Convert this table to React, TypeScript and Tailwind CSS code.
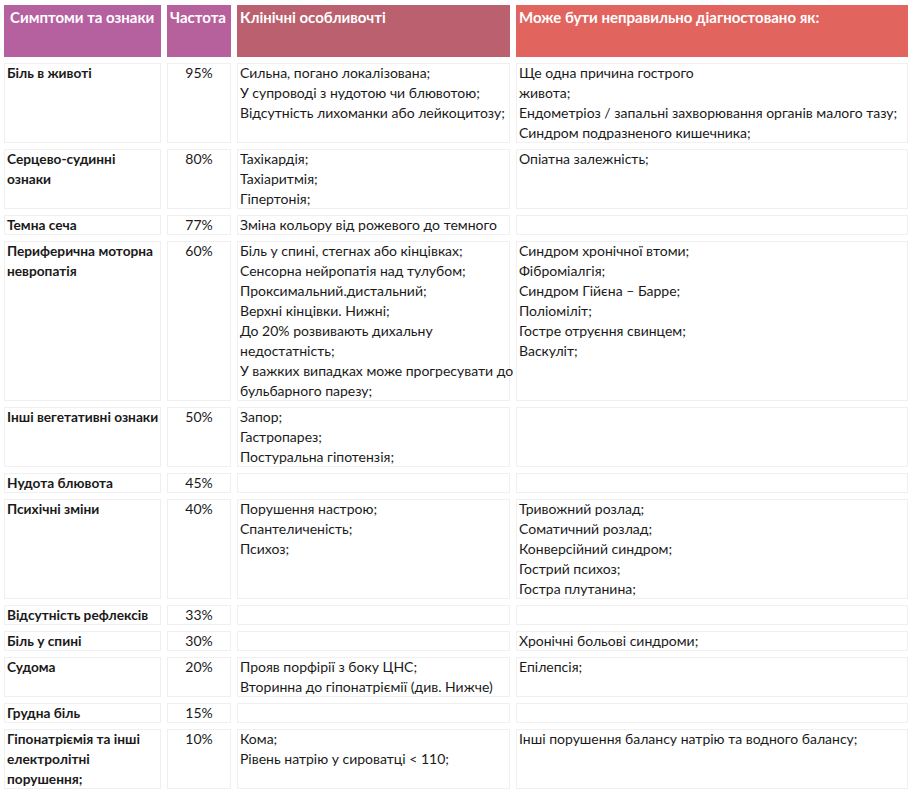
import React from "react";

type Row = {
  name: string[];
  freq: string;
  features: string[];
  misdx: string[];
};

const rows: Row[] = [
  {
    name: ["Біль в животі"],
    freq: "95%",
    features: [
      "Сильна, погано локалізована;",
      "У супроводі з нудотою чи блювотою;",
      "Відсутність лихоманки або лейкоцитозу;",
    ],
    misdx: [
      "Ще одна причина гострого",
      "живота;",
      "Ендометріоз / запальні захворювання органів малого тазу;",
      "Синдром подразненого кишечника;",
    ],
  },
  {
    name: ["Серцево-судинні", "ознаки"],
    freq: "80%",
    features: ["Тахікардія;", "Тахіаритмія;", "Гіпертонія;"],
    misdx: ["Опіатна залежність;"],
  },
  {
    name: ["Темна сеча"],
    freq: "77%",
    features: ["Зміна кольору від рожевого до темного"],
    misdx: [],
  },
  {
    name: ["Периферична моторна", "невропатія"],
    freq: "60%",
    features: [
      "Біль у спині, стегнах або кінцівках;",
      "Сенсорна нейропатія над тулубом;",
      "Проксимальний.дистальний;",
      "Верхні кінцівки. Нижні;",
      "До 20% розвивають дихальну",
      "недостатність;",
      "У важких випадках може прогресувати до",
      "бульбарного парезу;",
    ],
    misdx: [
      "Синдром хронічної втоми;",
      "Фіброміалгія;",
      "Синдром Гійєна – Барре;",
      "Поліоміліт;",
      "Гостре отруєння свинцем;",
      "Васкуліт;",
    ],
  },
  {
    name: ["Інші вегетативні ознаки"],
    freq: "50%",
    features: ["Запор;", "Гастропарез;", "Постуральна гіпотензія;"],
    misdx: [],
  },
  { name: ["Нудота блювота"], freq: "45%", features: [], misdx: [] },
  {
    name: ["Психічні зміни"],
    freq: "40%",
    features: ["Порушення настрою;", "Спантеличеність;", "Психоз;"],
    misdx: [
      "Тривожний розлад;",
      "Соматичний розлад;",
      "Конверсійний синдром;",
      "Гострий психоз;",
      "Гостра плутанина;",
    ],
  },
  { name: ["Відсутність рефлексів"], freq: "33%", features: [], misdx: [] },
  {
    name: ["Біль у спині"],
    freq: "30%",
    features: [],
    misdx: ["Хронічні больові синдроми;"],
  },
  {
    name: ["Судома"],
    freq: "20%",
    features: [
      "Прояв порфірії з боку ЦНС;",
      "Вторинна до гіпонатріємії (див. Нижче)",
    ],
    misdx: ["Епілепсія;"],
  },
  { name: ["Грудна біль"], freq: "15%", features: [], misdx: [] },
  {
    name: ["Гіпонатріємія та інші", "електролітні", "порушення;"],
    freq: "10%",
    features: ["Кома;", "Рівень натрію у сироватці < 110;"],
    misdx: ["Інші порушення балансу натрію та водного балансу;"],
  },
];

// one div per line, breaks are kept as in the source table
const Lines = ({ items }: { items: string[] }) => (
  <>
    {items.map((t, i) => (
      <div key={i} className="whitespace-nowrap">
        {t}
      </div>
    ))}
  </>
);

const cell = "min-h-[20px] ring-1 ring-inset ring-[#f0f0f0] bg-white";
const head = "h-[52px] pt-[2px] font-bold text-[15px] text-white whitespace-nowrap";

export default function App() {
  return (
    <div
      className="w-[912px] h-[796px] overflow-hidden bg-white pl-[4px] pt-[5px] text-[14px] leading-[20px] text-[#1a1a1a]"
      style={{ fontFamily: "Lato, 'Liberation Sans', sans-serif" }}
    >
      <div className="grid grid-cols-[157px_64px_273px_392px] gap-x-[6px] gap-y-[6px]">
        <div className={`${head} bg-[#b5619f] px-[6px]`}>Симптоми та ознаки</div>
        <div className={`${head} bg-[#b7619c] px-[3px]`}>Частота</div>
        <div className={`${head} bg-[#bb606f] px-[3px]`}>Клінічні особливочті</div>
        <div className={`${head} bg-[#e1645f] px-[3px]`}>
          Може бути неправильно діагностовано як:
        </div>

        {rows.map((r, i) => (
          <React.Fragment key={i}>
            <div className={`${cell} px-[3px] font-bold text-[13.7px]`}>
              <Lines items={r.name} />
            </div>
            <div className={`${cell} text-center`}>{r.freq}</div>
            <div className={`${cell} px-[3px]`}>
              <Lines items={r.features} />
            </div>
            <div className={`${cell} px-[3px]`}>
              <Lines items={r.misdx} />
            </div>
          </React.Fragment>
        ))}
      </div>
    </div>
  );
}
